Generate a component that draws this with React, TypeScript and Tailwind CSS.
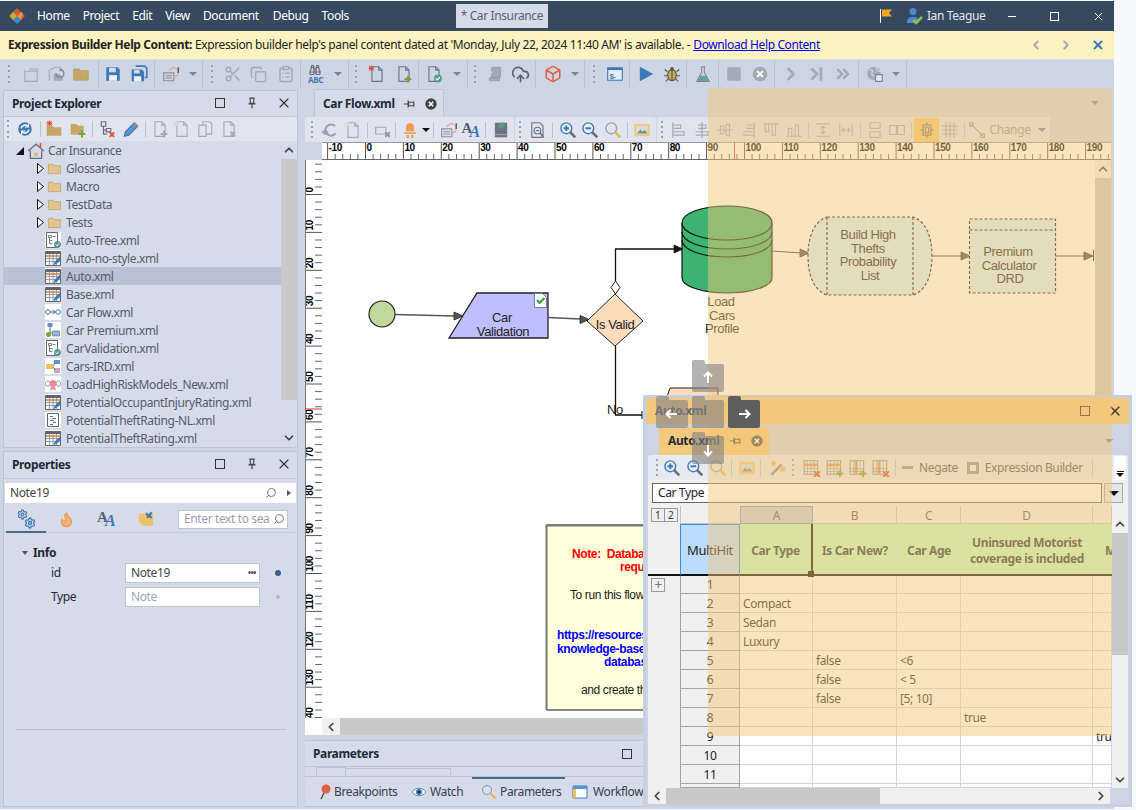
import type { ReactNode } from "react";
import {
  Binoculars,
  Box,
  ChevronDown,
  ChevronLeft,
  ChevronRight,
  ChevronUp,
  ChevronsRight,
  ClipboardList,
  CloudUpload,
  Copy,
  Flame,
  Scissors,
  Search,
  Settings,
  X,
} from "lucide-react";

const G = "#a3aab5";

const Svg = ({ children, size = 18 }: { children: ReactNode; size?: number }) => (
  <svg width={size} height={size} viewBox="0 0 16 16" fill="none">
    {children}
  </svg>
);

// toolbar pieces
const Tb = ({ children, className = "" }: { children: ReactNode; className?: string }) => (
  <div className={`flex h-[24px] w-[25px] shrink-0 items-center justify-center ${className}`}>{children}</div>
);
const Sep = ({ className = "", h = "h-[28px]" }: { className?: string; h?: string }) => (
  <div className={`w-px shrink-0 bg-[#b9c2d1] ${h} ${className}`} />
);
const Grip = ({ className = "" }: { className?: string }) => (
  <div className={`flex h-[18px] w-[8px] shrink-0 flex-col items-center justify-between ${className}`}>
    {[0, 1, 2, 3].map((i) => (
      <div key={i} className="h-[2px] w-[2px] bg-[#9aa3b0]" />
    ))}
  </div>
);
const Dd = ({ className = "", dark = false }: { className?: string; dark?: boolean }) => (
  <div className={`flex w-[10px] shrink-0 justify-center ${className}`}>
    <div
      className={`h-0 w-0 border-x-[4px] border-t-[4px] border-x-transparent ${dark ? "border-t-[#111]" : "border-t-[#7d8490]"}`}
    />
  </div>
);

// drawn icons
const Doc = ({ c = G }: { c?: string }) => (
  <path d="M3.5 1.5h6l3 3v10h-9z M9.5 1.5v3h3" stroke={c} />
);
const Star = ({ c = "#e0533c", x = 3, y = 3 }: { c?: string; x?: number; y?: number }) => (
  <path d={`M${x - 2.5} ${y}h5 M${x} ${y - 2.5}v5 M${x - 2} ${y - 2}l4 4 M${x + 2} ${y - 2}l-4 4`} stroke={c} strokeWidth="0.9" />
);
const NewDoc = ({ c = G, star = "#d9d9d9" }: { c?: string; star?: string }) => (
  <Svg>
    <Doc c={c} />
    <Star c={star} />
  </Svg>
);
const NewWin = () => (
  <Svg>
    <path d="M2.5 3.5h11v11h-11z" stroke={G} />
    <path d="M2.5 5.5h11" stroke={G} />
    <Star c="#dcdcdc" x={4} y={3} />
  </Svg>
);
const OpenGrey = () => (
  <Svg>
    <path d="M2 14V5l5-3h5v4" stroke={G} />
    <path d="M6 14V8h5l3 3v3z" fill={G} />
    <path d="M11 4a3.5 3.5 0 1 1-3 3" stroke="#7e8693" strokeWidth="1.2" />
  </Svg>
);
const Folder = ({ c = "#c5a768", size = 18 }: { c?: string; size?: number }) => (
  <Svg size={size}>
    <path d="M1.5 13.5V3.5h5l1.5 1.5h6.5v8.5z" fill={c} stroke="#b2965a" strokeWidth="0.6" />
  </Svg>
);
const Floppy = ({ c = "#3f78b5" }: { c?: string }) => (
  <Svg>
    <path d="M2 2h10l2 2v10H2z" fill={c} />
    <path d="M4.5 2.5h6v4h-6z" fill="#d5dbe9" />
    <path d="M4.5 9h7v5h-7z" fill="#eef1f7" />
  </Svg>
);
const SaveAll = () => (
  <Svg>
    <path d="M5 1h8l2 2v8h-2" stroke="#3f78b5" strokeWidth="1.4" />
    <path d="M1.5 4h9l2 2v8.500h-11z" fill="#3f78b5" />
    <path d="M3.500 4.500h5v3h-5z" fill="#d5dbe9" />
    <path d="M3.500 10h6.500v4.500H3.500z" fill="#eef1f7" />
  </Svg>
);
const ReDoc = () => (
  <Svg>
    <path d="M1.500 7h9v7h-9z" stroke="#8a919c" />
    <path d="M3 9.500h6M3 11.500h6" stroke="#8a919c" />
    <path d="M6 5l4-3 4 2v5l-3 2" stroke="#e8a99b" strokeWidth="1.2" />
    <path d="M14.500 2v5" stroke="#555c68" strokeWidth="1.200" />
  </Svg>
);
const AbcBinoc = () => (
  <div className="flex flex-col items-center leading-none">
    <Binoculars size={12} strokeWidth={2.4} color="#666d78" />
    <span className="text-[8px] font-bold leading-[8px] text-[#3f78b5]">ABC</span>
  </div>
);
const DocPlus = () => (
  <Svg>
    <Doc c="#6d7480" />
    <path d="M11.500 9.500v6M8.500 12.500h6" stroke="#7aa23c" strokeWidth="1.800" />
  </Svg>
);
const DocCheck = ({ c = "#6d7480" }: { c?: string }) => (
  <Svg>
    <Doc c={c} />
    <circle cx="11.500" cy="12" r="3.500" fill="#5c9a8a" />
    <path d="M9.800 12l1.200 1.300 2.200-2.500" stroke="#fff" />
  </Svg>
);
const Scroll = () => (
  <Svg>
    <path d="M5 2h8v9H5z M3 11h9v3H3z" fill={G} stroke="#8f96a1" strokeWidth="0.6" />
    <path d="M6 6a4 4 0 0 0-3 5" stroke="#d7dbe3" />
  </Svg>
);
const Term = () => (
  <Svg>
    <path d="M1.500 2.500h13v11h-13z" fill="#e5eaf3" stroke="#3f78b5" />
    <path d="M1.500 2.500h13v2h-13z" fill="#3f78b5" />
    <text x="3" y="12" fontSize="7" fontFamily="Liberation Sans" fontWeight="bold" fill="#3f78b5">
      $-
    </text>
  </Svg>
);
const Play = () => (
  <Svg>
    <path d="M2.500 1.500L14.500 8l-12 6.500z" fill="#3a7ab8" />
  </Svg>
);
const BugIcon = () => (
  <Svg>
    <ellipse cx="8" cy="9" rx="3.800" ry="5" fill="#c4ab60" stroke="#5d5748" />
    <path d="M8 4v10 M4 6L1.500 4 M12 6l2.500-2 M4 9.500H1 M12 9.500h3 M4.500 12.500l-2 2 M11.500 12.500l2 2" stroke="#5d5748" />
    <circle cx="8" cy="3.500" r="1.800" fill="#5d5748" />
  </Svg>
);
const Flask = () => (
  <Svg>
    <path d="M6 1.500h4M6.800 1.500v5L2.500 14.500h11L9.200 6.500v-5" stroke="#7f8895" />
    <path d="M5 9.500h6l2.200 4.700H2.800z" fill="#68a594" />
  </Svg>
);
const Stop = () => (
  <Svg>
    <path d="M2 2h12v12H2z" fill="#a4abb6" />
  </Svg>
);
const CircX = ({ size = 18, c = "#a4abb6" }: { size?: number; c?: string }) => (
  <Svg size={size}>
    <circle cx="8" cy="8" r="6.500" fill={c} />
    <path d="M5.500 5.500l5 5M10.500 5.500l-5 5" stroke="#fff" strokeWidth="1.800" />
  </Svg>
);
const Chev = () => <ChevronRight size={20} strokeWidth={3.4} color="#a4abb6" />;
const ChevBar = () => (
  <Svg>
    <path d="M3 3l5 5-5 5" stroke="#a4abb6" strokeWidth="2.500" />
    <path d="M11.500 2v12" stroke="#a4abb6" strokeWidth="2.500" />
  </Svg>
);
const GlobeDoc = () => (
  <Svg>
    <circle cx="7" cy="7.500" r="6" fill="#a4abb6" />
    <path d="M3 4l3 1-1 3 2 2M9 2l1 3 3 1" stroke="#cdd5e5" />
    <path d="M8.500 8.500h6v6h-6z" fill="#e3e7ef" stroke="#7e8693" />
  </Svg>
);
const Undo = () => (
  <Svg>
    <path d="M12.500 4.500A5 5 0 1 0 13 11 M3.500 11v-4 M1 9l2.500 2.500L6 9" stroke="#9ba2ad" strokeWidth="1.800" />
  </Svg>
);
const DelBox = () => (
  <Svg>
    <path d="M1.500 5.500h9v6h-9z" stroke={G} />
    <path d="M10 10l4 4M14 10l-4 4" stroke="#8f96a1" strokeWidth="1.800" />
  </Svg>
);
const Bulb = () => (
  <Svg>
    <path d="M4.500 9V5.500a3.500 3.500 0 0 1 7 0V9z" fill="#ee9a4d" />
    <path d="M3 10h10v1.500H3z" fill="#ee9a4d" />
    <path d="M5 12.500h2v2.500H5zM9 12.500h2v2.500H9z" fill="#ee9a4d" />
  </Svg>
);
const FontA = () => (
  <div className="relative h-[18px] w-[20px] font-['Liberation_Serif',serif] leading-none">
    <span className="absolute left-0 top-0 text-[15px] font-bold text-[#5a616d]">A</span>
    <span className="absolute left-[8px] top-[3px] text-[16px] font-bold italic text-[#3f78b5]">A</span>
  </div>
);
const Book = () => (
  <Svg>
    <path d="M2.500 1.500h11v13h-11z" fill="#6d7480" />
    <path d="M6 1.500h5v5.500l-2.500-1.500L6 7z" fill="#5c9a8a" />
    <path d="M2.500 12h11" stroke="#9aa1ac" />
  </Svg>
);
const DocSearch = () => (
  <Svg>
    <path d="M2.500 1.500h7l3 3v10h-10z" stroke="#6d7480" />
    <circle cx="7.500" cy="8.500" r="3" stroke="#6d7480" />
    <path d="M9.800 10.800l3.200 3.200" stroke="#6d7480" strokeWidth="1.500" />
    <path d="M6 8.500h3" stroke="#3f78b5" />
  </Svg>
);
const Lens = ({ sign }: { sign?: "+" | "-" }) => (
  <Svg>
    <circle cx="6.500" cy="6.500" r="4.800" fill={sign ? "#e9eef6" : "none"} stroke={sign ? "#3f78b5" : "#9aa3b0"} strokeWidth="1.200" />
    {sign && <path d="M4 6.500h5" stroke="#3f78b5" strokeWidth="1.800" />}
    {sign === "+" && <path d="M6.500 4v5" stroke="#3f78b5" strokeWidth="1.800" />}
    <path d="M10 10l4.500 4.500" stroke={sign ? "#666d78" : "#e9b654"} strokeWidth="2.200" />
  </Svg>
);
const Pic = () => (
  <Svg>
    <path d="M1 2.500h14v11H1z" fill="#f0c97e" />
    <path d="M3 4.500h10v7H3z" fill="#d7dde9" />
    <path d="M3.500 11l3-3.500 2 2 2-1.500 2.500 3z" fill="#6c9c7c" />
  </Svg>
);
const Align = ({ d }: { d: string }) => (
  <Svg>
    <path d={d} stroke={G} />
  </Svg>
);
const SnapIcon = () => (
  <Svg>
    <path d="M2 8h12M8 1v14" stroke="#6d7480" />
    <path d="M4.500 3.500h7v9h-7z" fill="#f5c775" stroke="#6d7480" />
    <path d="M6.500 5.500h3v5h-3z" stroke="#6d7480" />
  </Svg>
);
const GridIcon = () => (
  <Svg>
    <path d="M1 4.500h14M1 8h14M1 11.500h14M4.500 1v14M8 1v14M11.500 1v14" stroke={G} />
  </Svg>
);
const Connector = () => (
  <Svg>
    <path d="M3 3l10 10" stroke="#8f96a1" />
    <path d="M1.500 1.500h3v3h-3zM11.500 11.500h3v3h-3z" stroke="#8f96a1" />
  </Svg>
);
const Refresh = () => (
  <Svg>
    <circle cx="8" cy="8" r="6" fill="#3f78b5" />
    <path d="M4.500 7.500a3.600 3.600 0 0 1 6.300-1.800 M11.500 8.500a3.600 3.600 0 0 1-6.300 1.800" stroke="#fff" strokeWidth="1.400" />
    <path d="M11 3v3.200H7.800M5 13V9.800h3.200" stroke="#fff" />
  </Svg>
);
const FolderStar = () => (
  <Svg>
    <path d="M1.500 14V5h5l1.500 1.500h6.500V14z" fill="#c5a768" />
    <Star x={4} y={3} />
  </Svg>
);
const FolderPlus = () => (
  <Svg>
    <path d="M1.500 13V3.500h5L8 5h5v8z" fill="#c5a768" />
    <path d="M11.500 9v6.500M8.500 12.500h6" stroke="#7aa23c" strokeWidth="1.800" />
  </Svg>
);
const TreeDel = () => (
  <Svg>
    <path d="M2 1.500h4v4H2zM6.500 7.500h4v3h-4zM4 5.500v7h3M4 9h2.500" stroke="#666d78" />
    <path d="M9.500 11l4 4M13.500 11l-4 4" stroke="#e0533c" strokeWidth="1.800" />
  </Svg>
);
const Pencil = () => (
  <Svg>
    <path d="M2 14.500l1-4L11 2.500l3 3-8 8z" fill="#5d93cf" stroke="#3f78b5" />
    <path d="M11 2.500l3 3" stroke="#d87a6a" strokeWidth="1.600" />
  </Svg>
);
const CopyDoc = () => (
  <Svg>
    <path d="M6 1.500h6l2 2v9H6z" stroke={G} />
    <path d="M2.500 4.500h6.500v10H2.500z" fill="#dfe4ef" stroke={G} />
  </Svg>
);
const DocDel = () => (
  <Svg>
    <Doc />
    <path d="M9.500 10.500l4 4M13.500 10.500l-4 4" stroke="#a6acb6" strokeWidth="1.800" />
  </Svg>
);
const DocPlusGrey = () => (
  <Svg>
    <Doc />
    <path d="M11.500 9.500v6M8.500 12.500h6" stroke={G} strokeWidth="1.800" />
  </Svg>
);
const Pin = ({ c = "#444" }: { c?: string }) => (
  <Svg size={14}>
    <path d="M5 2.500h6M6 2.500v6h4v-6 M4 9h8 M8 9v5" stroke={c} strokeWidth="1.300" />
  </Svg>
);
const PinSide = ({ c = "#444" }: { c?: string }) => (
  <Svg size={14}>
    <path d="M13.500 5v6 M13.500 6h-6v4h6 M7 4v8 M7 8H2" stroke={c} strokeWidth="1.300" />
  </Svg>
);

// explorer file icons
const FileBg = ({ children }: { children: ReactNode }) => (
  <svg width="16" height="16" viewBox="0 0 16 16" fill="none">
    <rect width="16" height="16" fill="#fff" />
    {children}
  </svg>
);
const TableFile = () => (
  <FileBg>
    <path d="M0.500 1.500h15v14h-15z" fill="#f4f4f4" stroke="#5f6670" />
    <path d="M1 2h14v2H1z" fill="#5f6670" />
    <path d="M1 5h14v2H1z" fill="#e59c55" />
    <path d="M1 8.500h14M1 11.500h14M4.500 4v11.500M8 4v11.500M11.500 4v11.500" stroke="#8a919c" strokeWidth="0.800" />
    <path d="M8.500 15l1-3 5-5 2 2-5 5z" fill="#3f78b5" />
  </FileBg>
);
const RuleFile = () => (
  <FileBg>
    <path d="M1.500 0.500h11v15h-11z" stroke="#5f6670" />
    <path d="M3.500 3.500h3v2h-3zM4.500 5.500v6h3M4.500 8.500h3M7.500 4.500h3" stroke="#5f6670" strokeWidth="0.800" />
    <circle cx="12.500" cy="12.500" r="3.500" fill="#5c9a8a" />
    <path d="M10.800 12.500l1.200 1.300 2.200-2.500" stroke="#fff" />
  </FileBg>
);
const FlowFile = () => (
  <FileBg>
    <circle cx="3" cy="8" r="2.300" stroke="#3f78b5" />
    <circle cx="13" cy="8" r="2.300" stroke="#3f78b5" />
    <path d="M5.500 8h5M7.500 6l2.500 2-2.500 2" stroke="#5f6670" />
  </FileBg>
);
const TreeFile = () => (
  <FileBg>
    <path d="M2.500 1h5v4h-5z" fill="#5d93cf" />
    <path d="M5 5v6h2" stroke="#5f6670" />
    <circle cx="3.500" cy="12.500" r="2.500" fill="#7aa23c" />
    <path d="M7.500 9h7v5h-7z" fill="#8fb8e0" stroke="#5f6670" strokeWidth="0.600" />
  </FileBg>
);
const IrdFile = () => (
  <FileBg>
    <path d="M1 6h7v5H1z" fill="#f0c05a" />
    <path d="M9 2h6v4H9z" fill="#5d93cf" />
    <path d="M9 10h6v5H9z" fill="#c9a5c0" />
    <path d="M8 8l2-3M8 9l2 3" stroke="#5f6670" />
  </FileBg>
);
const LoadFile = () => (
  <FileBg>
    <path d="M0 8c1-4 4-4 5-1m6 0c1-3 4-3 5 1-1 3-4 3-5 0m-6 0c-1 3-4 3-5 0" stroke="#8a919c" />
    <circle cx="8" cy="7.500" r="3.500" fill="#e88aa0" />
    <path d="M6 11l-1 4 3-2 3 2-1-4" fill="#e88aa0" />
  </FileBg>
);
const NlFile = () => (
  <FileBg>
    <path d="M2.500 1.500h11v13h-11z" stroke="#5f6670" />
    <path d="M5 4.500h3M7 6.500h4M5 8.500h4M8 10.500h3M5 12.500h3" stroke="#3f78b5" />
    <path d="M7 6.500h2M5 8.500h2" stroke="#e0533c" />
  </FileBg>
);
const Home = () => (
  <Svg size={18}>
    <path d="M1 8l7-6 7 6M3 7.500v7h10v-7" stroke="#6d7480" strokeWidth="1.200" />
    <path d="M6.500 9.500h3v3h-3z" fill="#e9b654" />
    <path d="M12 1v4" stroke="#e0533c" strokeWidth="1.500" />
  </Svg>
);

const treeFiles: [string, () => ReactNode][] = [
  ["Auto-Tree.xml", RuleFile],
  ["Auto-no-style.xml", TableFile],
  ["Auto.xml", TableFile],
  ["Base.xml", TableFile],
  ["Car Flow.xml", FlowFile],
  ["Car Premium.xml", TreeFile],
  ["CarValidation.xml", RuleFile],
  ["Cars-IRD.xml", IrdFile],
  ["LoadHighRiskModels_New.xml", LoadFile],
  ["PotentialOccupantInjuryRating.xml", TableFile],
  ["PotentialTheftRating-NL.xml", NlFile],
  ["PotentialTheftRating.xml", TableFile],
];

const Tri = () => (
  <svg width="7" height="11" viewBox="0 0 7 11">
    <path d="M0.500 0.500l6 5-6 5z" fill="#fff" stroke="#111" />
  </svg>
);

const ProjectTree = () => (
  <div className="flex h-[306px] min-w-0 flex-1 flex-col overflow-hidden text-[12px] text-[#565b6b]">
    <div className="flex h-[18px] shrink-0 items-center pl-[12px] pt-px">
      <svg width="8" height="8" viewBox="0 0 8 8">
        <path d="M8 0v8H0z" fill="#111" />
      </svg>
      <div className="ml-[3px] mr-[3px]">
        <Home />
      </div>
      Car Insurance
    </div>
    {["Glossaries", "Macro", "TestData", "Tests"].map((t) => (
      <div key={t} className="flex h-[18px] shrink-0 items-center pl-[33px] pt-px">
        <Tri />
        <div className="ml-[3px] mr-[4px]">
          <Folder c="#e1c48e" size={15} />
        </div>
        {t}
      </div>
    ))}
    {treeFiles.map(([name, Icon]) => (
      <div
        key={name}
        className={`flex h-[18px] shrink-0 items-center pl-[41px] ${name === "Auto.xml" ? "bg-[#b9c1d4]" : ""}`}
      >
        <div className="mr-[5px] flex">
          <Icon />
        </div>
        <span className="pt-px">{name}</span>
      </div>
    ))}
  </div>
);

const WinBtns = () => (
  <>
    <div className="absolute left-[211px] top-[7px] h-[10px] w-[10px] border-[1.500px] border-[#333]" />
    <div className="absolute left-[241px] top-[5px]">
      <Pin />
    </div>
    <div className="absolute left-[272px] top-[4px]">
      <X size={16} color="#333" strokeWidth={1.6} />
    </div>
  </>
);

const ExplorerPanel = () => (
  <div className="h-[358px] w-[295px] border border-[#bcc5d3] bg-[#d5dbe9]">
    <div className="relative flex h-[26px] items-center border-b border-[#c3cad8] pl-[8px] text-[12px] font-bold text-[#1f2937]">
      Project Explorer
      <WinBtns />
    </div>
    <div className="flex h-[24px] items-center rounded-t-[3px] bg-[#e0e5ef]">
      <Grip />
      <Tb className="ml-[0.500px]">
        <Refresh />
      </Tb>
      <Sep h="h-[16px]" className="ml-[2.500px]" />
      <Tb className="ml-[0.500px]">
        <FolderStar />
      </Tb>
      <Tb className="ml-[-1px]">
        <FolderPlus />
      </Tb>
      <Sep h="h-[16px]" className="ml-[1.500px]" />
      <Tb className="ml-[2.500px]">
        <TreeDel />
      </Tb>
      <Tb className="ml-[-2px]">
        <Pencil />
      </Tb>
      <Sep h="h-[16px]" className="ml-[1.500px]" />
      <Tb className="ml-[1px]">
        <DocPlusGrey />
      </Tb>
      <Tb className="ml-[-3px]">
        <NewDoc />
      </Tb>
      <Tb className="ml-[-2px]">
        <CopyDoc />
      </Tb>
      <Tb className="ml-[-1px]">
        <DocDel />
      </Tb>
    </div>
    <div className="flex">
      <ProjectTree />
      <div className="flex w-[16px] shrink-0 flex-col items-center">
        <ChevronUp size={14} strokeWidth={3} color="#444" className="my-[2px]" />
        <div className="h-[241px] w-full bg-[#c8c8c8]" />
        <div className="flex-1" />
        <ChevronDown size={14} strokeWidth={3} color="#444" className="my-[2px]" />
      </div>
    </div>
  </div>
);

const PropertiesPanel = () => (
  <div className="mt-[3px] flex h-[356px] w-[295px] flex-col border border-[#bcc5d3] bg-[#d5dbe9]">
    <div className="relative flex h-[27px] shrink-0 items-center border-b border-[#c3cad8] pl-[8px] text-[12px] font-bold text-[#1f2937]">
      Properties
      <WinBtns />
    </div>
    <div className="mx-px mt-[4px] flex h-[20px] items-center bg-white pl-[5px] pr-[5px] text-[12px] text-[#444]">
      Note19
      <Search size={12} color="#777" className="ml-auto mr-[10px] -scale-x-100" />
      <div className="h-0 w-0 border-y-[3px] border-l-[4px] border-y-transparent border-l-[#555]" />
    </div>
    <div className="relative mt-[3px] flex h-[27px] shrink-0 items-center border-b border-[#c3cad8]">
      <div className="absolute bottom-[-1px] left-[2px] h-[2px] w-[40px] bg-[#4a6a8a]" />
      <div className="ml-[10px] flex h-[20px] w-[24px] flex-col pl-[3px]">
        <Settings size={11} color="#3f78b5" strokeWidth={2.6} />
        <Settings size={12} color="#3f78b5" strokeWidth={2.6} className="ml-[7px] mt-[-3px]" />
      </div>
      <div className="ml-[16px] flex w-[24px] justify-center">
        <Flame size={17} color="#ee9a4d" fill="#f3b27a" />
      </div>
      <div className="ml-[17px] flex w-[24px] justify-center">
        <FontA />
      </div>
      <div className="ml-[15px] flex w-[24px] justify-center">
        <Svg>
          <path d="M1.500 3h13v11H5l-3.500-3.500z" fill="#ecc26f" />
          <path d="M9 7l4-5M8 3l5 4" stroke="#3f78b5" strokeWidth="1.800" />
        </Svg>
      </div>
      <div className="ml-auto mr-[9px] flex h-[19px] w-[110px] items-center border border-[#bcc5d3] bg-white pl-[5px] pr-[2px] text-[12px] text-[#9aa0ab]">
        <span className="w-[88px] overflow-hidden whitespace-nowrap">Enter text to sea</span>
        <Search size={12} color="#777" className="ml-auto -scale-x-100" />
      </div>
    </div>
    <div className="mt-[11px] flex h-[18px] items-center pl-[18px] text-[12px] font-bold text-[#1f2937]">
      <div className="mr-[5px] h-0 w-0 border-x-[3px] border-t-[4px] border-x-transparent border-t-[#555]" />
      Info
    </div>
    <div className="mt-px flex h-[20px] items-center text-[12px] text-[#1f2937]">
      <div className="w-[121px] pl-[47px]">id</div>
      <div className="flex h-[20px] w-[135px] items-center border border-[#bcc5d3] bg-white pl-[5px] pr-[3px] text-[#444]">
        Note19
        <span className="ml-auto text-[8px] font-bold leading-none">•••</span>
      </div>
      <div className="ml-[15px] h-[6px] w-[6px] rounded-full bg-[#3f5f85]" />
    </div>
    <div className="mt-[4px] flex h-[20px] items-center text-[12px] text-[#1f2937]">
      <div className="w-[121px] pl-[47px]">Type</div>
      <div className="flex h-[20px] w-[135px] items-center border border-[#bcc5d3] bg-white pl-[5px] text-[#a0a6b0]">
        Note
      </div>
      <div className="ml-[16px] h-[4px] w-[4px] rounded-full bg-[#b5bcc9]" />
    </div>
    <div className="mx-[11px] mt-[122px] h-px bg-[#bcc3d2]" />
  </div>
);

const MainToolbar = () => (
  <div className="flex h-[29px] shrink-0 items-center border-t border-[#d8deea] bg-[#cdd5e5] pl-[5px]">
    <Grip />
    <Tb className="ml-[5.500px]"><NewWin /></Tb>
    <Tb><OpenGrey /></Tb>
    <Tb><Folder /></Tb>
    <Sep className="ml-[4px]" />
    <Tb className="ml-[2px]"><Floppy /></Tb>
    <Tb className="ml-[1px]"><SaveAll /></Tb>
    <Sep className="ml-[2px]" />
    <Tb className="ml-[4px]"><ReDoc /></Tb>
    <Dd className="ml-[4.500px]" />
    <Sep className="ml-[4px]" />
    <Grip className="ml-[4.500px]" />
    <Tb className="ml-[4.500px]"><Scissors size={18} color={G} /></Tb>
    <Tb className="ml-[1px]"><Copy size={17} color={G} /></Tb>
    <Tb className="ml-[2px]"><ClipboardList size={18} color={G} /></Tb>
    <Sep className="ml-[2px]" />
    <Tb className="ml-[2px]"><AbcBinoc /></Tb>
    <Dd className="ml-[5px]" />
    <Sep className="ml-[5px]" />
    <Grip className="ml-[3px]" />
    <Tb className="ml-[4.500px]"><NewDoc c="#6d7480" star="#e0533c" /></Tb>
    <Tb className="ml-[2px]"><DocPlus /></Tb>
    <Sep className="ml-[1px]" />
    <Tb className="ml-[3px]"><DocCheck /></Tb>
    <Dd className="ml-[5px]" />
    <Sep className="ml-[5px]" />
    <Grip className="ml-[3px]" />
    <Tb className="ml-[3.500px]"><Scroll /></Tb>
    <Tb className="ml-[1px]"><CloudUpload size={19} color="#56606e" /></Tb>
    <Sep className="ml-[2px]" />
    <Tb className="ml-[4px]"><Box size={18} color="#e0603f" /></Tb>
    <Dd className="ml-[5px]" />
    <Sep className="ml-[4px]" />
    <Grip className="ml-[4.500px]" />
    <Tb className="ml-[4.500px]"><Term /></Tb>
    <Sep className="ml-[2px]" />
    <Tb className="ml-[3px]"><Play /></Tb>
    <Tb className="ml-[1px]"><BugIcon /></Tb>
    <Sep className="ml-[2px]" />
    <Tb className="ml-[3px]"><Flask /></Tb>
    <Sep className="ml-[3px]" />
    <Tb className="ml-[2px]"><Stop /></Tb>
    <Tb className="ml-[1px]"><CircX /></Tb>
    <Sep className="ml-[2px]" />
    <Tb className="ml-[3px]"><Chev /></Tb>
    <Tb className="ml-[1px]"><ChevBar /></Tb>
    <Tb className="ml-[1px]"><ChevronsRight size={20} strokeWidth={3} color="#a4abb6" /></Tb>
    <Sep className="ml-[3px]" />
    <Tb className="ml-[3px]"><GlobeDoc /></Tb>
    <Dd className="ml-[4px]" />
    <Sep className="ml-[5px]" />
  </div>
);

const DocToolbar = () => (
  <div className="flex h-[25px] shrink-0 items-stretch bg-[#cdd5e5] text-[12px]">
    <div className="flex w-[209px] items-center rounded-t-[3px] bg-[#dfe4ef]">
      <Grip className="ml-[3px]" />
      <Tb className="ml-[1px]"><Undo /></Tb>
      <Tb className="ml-[-2px]"><NewDoc /></Tb>
      <Sep h="h-[16px]" className="ml-[2px]" />
      <Tb className="ml-[2px]"><DelBox /></Tb>
      <Sep h="h-[16px]" className="ml-[0px]" />
      <Tb className="ml-[1px]"><Bulb /></Tb>
      <Dd className="ml-[-1px]" dark />
      <Sep h="h-[16px]" className="ml-[2px]" />
      <Tb className="ml-[2px]"><ReDoc /></Tb>
      <Tb className="ml-[-2px]"><FontA /></Tb>
      <Sep h="h-[16px]" className="ml-[1px]" />
      <Tb className="ml-[2px]"><Book /></Tb>
    </div>
    <div className="ml-px flex w-[141px] items-center rounded-t-[3px] bg-[#dfe4ef]">
      <Grip className="ml-[1px]" />
      <Tb className="ml-[1px]"><DocSearch /></Tb>
      <Sep h="h-[16px]" className="ml-[2px]" />
      <Tb className="ml-[2px]"><Lens sign="+" /></Tb>
      <Tb className="ml-[-3px]"><Lens sign="-" /></Tb>
      <Tb className="ml-[-2px]"><Lens /></Tb>
      <Sep h="h-[16px]" className="ml-[2px]" />
      <Tb className="ml-[1px]"><Pic /></Tb>
    </div>
    <div className="ml-px flex w-[393px] items-center rounded-t-[3px] bg-[#dfe4ef]">
      <Grip className="ml-[1px]" />
      <Tb className="ml-[0px]"><Align d="M2.500 1v14M2.500 3.500h7v3h-7M2.500 9.500h10v3h-10" /></Tb>
      <Tb className="ml-[-2px]"><Align d="M8 1v14M4.500 3.500h7v3h-7M2.500 9.500h11v3h-11" /></Tb>
      <Tb className="ml-[-2px]"><Align d="M1 8h14M4 4.500h3v7H4zM9 3h3v10H9z" /></Tb>
      <Tb className="ml-[-2px]"><Align d="M13.500 1v14M6.500 3.500h7v3h-7M3.500 9.500h10v3h-10" /></Tb>
      <Tb className="ml-[-2px]"><Align d="M1 2.500h14M3 2.500v7h3v-7M9 2.500v10h3v-10" /></Tb>
      <Tb className="ml-[-2px]"><Align d="M1 13.500h14M3 13.500v-7h3v7M9 13.500v-10h3v10" /></Tb>
      <Sep h="h-[16px]" className="ml-[1.500px]" />
      <Tb className="ml-[2px]"><Align d="M2 2.500h12M2 13.500h12M8 5v6M6 6.500L8 4.500l2 2M6 9.500l2 2 2-2" /></Tb>
      <Tb className="ml-[-2.500px]"><Align d="M2.500 3v10M13.500 3v10M5 8h6M6.500 6L4.500 8l2 2M9.500 6l2 2-2 2" /></Tb>
      <Sep h="h-[16px]" className="ml-[2px]" />
      <Tb className="ml-[1px]"><Align d="M3.500 1.500h9v5h-9zM3.500 9.500h9v5h-9z" /></Tb>
      <Tb className="ml-[-2.500px]"><Align d="M1.500 4h6v8h-6zM8.500 4h6v8h-6z" /></Tb>
      <Sep h="h-[16px]" className="ml-[1.500px]" />
      <Tb className="ml-[2px] bg-[#f5c775]"><SnapIcon /></Tb>
      <Tb className="ml-[-2px]"><GridIcon /></Tb>
      <Sep h="h-[16px]" className="ml-[1.500px]" />
      <Tb className="ml-[0px]"><Connector /></Tb>
      <span className="text-[#8f96a1]">Change</span>
      <Dd className="ml-[6px]" />
    </div>
  </div>
);

const HRuler = () => {
  const ticks = [];
  for (let i = -2; i < 24; i++) {
    const x = 5.600 + (i + 1) * 37.9;
    ticks.push(
      <g key={i}>
        <line x1={x} x2={x} y1={0} y2={18} stroke="#555" />
        {[1, 2, 3, 4].map((k) => (
          <line key={k} x1={x + k * 7.58} x2={x + k * 7.58} y1={12} y2={18} stroke="#666" />
        ))}
        <text x={x + 1} y={9} fontSize="10" fontWeight="bold" fontFamily="Liberation Sans" fill="#000">
          {i * 10}
        </text>
      </g>,
    );
  }
  return (
    <svg width="789" height="18" className="bg-white">
      {ticks}
      <line x1="0" x2="789" y1="0.500" y2="0.500" stroke="#999" />
      <line x1="0" x2="789" y1="17.500" y2="17.500" stroke="#666" />
      <line x1="412.500" x2="412.500" y1="0" y2="18" stroke="#e03030" />
    </svg>
  );
};

const VRuler = () => {
  const ticks = [];
  for (let i = 0; i < 15; i++) {
    const y = 34.5 + i * 37.9;
    ticks.push(
      <g key={i}>
        <line x1={0} x2={17} y1={y} y2={y} stroke="#555" />
        {[-1, -2, -3, -4].map((k) => (
          <line key={k} x1={10} x2={17} y1={y + k * 7.58} y2={y + k * 7.58} stroke="#666" />
        ))}
        <text
          transform={`translate(8 ${y - 2}) rotate(-90)`}
          fontSize="10"
          fontWeight="bold"
          fontFamily="Liberation Sans"
          fill="#000"
        >
          {i * 10}
        </text>
      </g>,
    );
  }
  return (
    <svg width="17" height="558" className="shrink-0 bg-white">
      {ticks}
      <line x1="0.500" x2="0.500" y1="0" y2="558" stroke="#777" />
      <line x1="0" x2="17" y1="249" y2="249" stroke="#e03030" />
    </svg>
  );
};

const T = ({ x, y, children, c = "#222", bold = false }: { x: number; y: number; children: string; c?: string; bold?: boolean }) => (
  <text x={x} y={y} textAnchor="middle" fontSize="13" fontFamily="Liberation Sans" fill={c} fontWeight={bold ? "bold" : "normal"}>
    {children}
  </text>
);
const S = ({ x, y, children, c = "#222", bold = false }: { x: number; y: number; children: string; c?: string; bold?: boolean }) => (
  <text x={x} y={y} fontSize="12" fontFamily="Liberation Sans" fill={c} fontWeight={bold ? "bold" : "normal"}>
    {children}
  </text>
);
const Arrow = ({ x, y, a = "#555", s = "#222" }: { x: number; y: number; a?: string; s?: string }) => (
  <path d={`M${x - 9} ${y - 4}L${x} ${y}L${x - 9} ${y + 4}z`} fill={a} stroke={s} strokeWidth="0.800" />
);

const Diagram = () => (
  <svg width="773" height="558" viewBox="322 160 773 558" fill="none" className="block bg-white">
    <circle cx="382" cy="314" r="13" fill="#c0d89a" stroke="#222" strokeWidth="1.200" />
    <path d="M395 314.500L455 316" stroke="#555" strokeWidth="1.300" />
    <Arrow x={463} y={316} />
    <path d="M477 293h71v45h-99z" fill="#bfbfff" stroke="#222" strokeWidth="1.300" />
    <path d="M534.500 293.500h8l4 4v10h-12z" fill="#fff" stroke="#6a7fb0" />
    <path d="M537 300l2.500 3 5-5" stroke="#2f9e2f" strokeWidth="2" />
    <T x={502} y={322}>Car</T>
    <T x={503} y={336}>Validation</T>
    <path d="M548 317.500L580 319" stroke="#555" strokeWidth="1.300" />
    <Arrow x={589} y={319.500} />
    <path d="M615 294l28 27-28 25-28-25z" fill="#fddcbc" stroke="#222" />
    <path d="M615.500 281l4.500 6.500-4.500 6.500-4.500-6.500z" fill="#fff" stroke="#222" />
    <T x={615} y={329}>Is Valid</T>
    <path d="M615.500 281v-32H675" stroke="#111" strokeWidth="1.300" />
    <Arrow x={683} y={249} a="#111" />
    <path d="M615.500 346v69H642" stroke="#111" strokeWidth="1.300" />
    <T x={615} y={414}>No</T>
    <path d="M642 411v8" stroke="#111" />
    <path d="M670 388h48v20h-55z" fill="#fddcbc" stroke="#222" />
    <path
      d="M682 223c0-10 20-17 45-17s45 7 45 17v55c0 8-20 15-45 15s-45-7-45-15z"
      fill="#3cb371"
      stroke="#111"
      strokeWidth="1.200"
    />
    <path
      d="M682 223c0 10 20 17 45 17s45-7 45-17M682 232c0 10 20 17 45 17s45-7 45-17M682 240c0 10 20 17 45 17s45-7 45-17"
      stroke="#111"
      strokeWidth="1.200"
    />
    <T x={721} y={306}>Load</T>
    <T x={722} y={320}>Cars</T>
    <T x={722} y={333}>Profile</T>
    <path d="M772 251L801 253" stroke="#333" />
    <Arrow x={809} y={253} />
    <path
      d="M827 217h86c12 4 19 18 19 39s-7 35-19 39h-86c-12-4-19-18-19-39s7-35 19-39z"
      fill="#d4f1ff"
      stroke="#222"
      strokeWidth="1.200"
      strokeDasharray="3 2"
    />
    <path d="M827 217v78M913 217v78" stroke="#222" strokeWidth="1.200" strokeDasharray="3 2" />
    <T x={868} y={239}>Build High</T>
    <T x={868} y={253}>Thefts</T>
    <T x={868} y={266}>Probability</T>
    <T x={870} y={280}>List</T>
    <path d="M932 256h29" stroke="#333" />
    <Arrow x={970} y={256} />
    <path d="M969.500 219h86v74h-86zM969.500 230h86" fill="#d4f1ff" stroke="#222" strokeWidth="1.200" strokeDasharray="3 2" />
    <T x={1008} y={256}>Premium</T>
    <T x={1009} y={270}>Calculator</T>
    <T x={1010} y={283}>DRD</T>
    <path d="M1055 256h29" stroke="#333" />
    <Arrow x={1093} y={256} />
    <path d="M1093.500 250v11" stroke="#222" />

    <path d="M546.500 525h420v185h-420z" fill="#ffffdc" stroke="#111" />
    <path d="M546.500 710V525.500H966" stroke="#777" strokeWidth="2" />
    <S x={572} y={558} c="#ff0000" bold>{"Note:\u00a0\u00a0Database connection"}</S>
    <S x={620} y={571} c="#ff0000" bold>required</S>
    <S x={570} y={599}>To run this flow, connect</S>
    <S x={557} y={639} c="#0000ff" bold>https://resources.example</S>
    <S x={557} y={653} c="#0000ff" bold>knowledge-base/setup</S>
    <S x={604} y={666} c="#0000ff" bold>database</S>
    <S x={581} y={694}>and create the tables.</S>
  </svg>
);

const Editor = () => (
  <div className="flex flex-col">
    <DocToolbar />
    <div className="flex h-[18px] overflow-hidden bg-[#cdd5e5]">
      <div className="w-[17px] shrink-0" />
      <HRuler />
    </div>
    <div className="flex h-[558px]">
      <VRuler />
      <div className="w-[773px] shrink-0">
        <Diagram />
      </div>
      <div className="flex w-[16px] shrink-0 flex-col items-center bg-[#f0f0f0]">
        <ChevronUp size={14} strokeWidth={3} color="#444" className="my-[2px]" />
        <div className="w-full flex-1 bg-[#c8c8c8]" />
      </div>
    </div>
    <div className="flex h-[17px] bg-[#cdd5e5]">
      <div className="w-[17px] shrink-0 bg-white" />
      <div className="flex w-[18px] shrink-0 items-center justify-center bg-[#f0f0f0]">
        <ChevronLeft size={14} strokeWidth={3} color="#444" />
      </div>
      <div className="w-[755px] bg-[#c8c8c8]" />
    </div>
  </div>
);

const BottomTab = ({ children, w, icon, active }: { children: string; w: string; icon: ReactNode; active?: boolean }) => (
  <div className={`relative flex h-[29px] shrink-0 items-center text-[12px] text-[#374151] ${w}`}>
    {active && <div className="absolute left-0 right-0 top-0 h-[2px] bg-[#4a6a8a]" />}
    {icon}
    {children}
  </div>
);

const ParamsPanel = () => (
  <div className="mt-[5px] flex h-[67px] flex-col border-y border-[#bcc5d3] bg-[#d5dbe9]">
    <div className="relative flex h-[26px] shrink-0 items-center border-b border-[#bcc5d3] pl-[8px] text-[12px] font-bold text-[#1f2937]">
      Parameters
      <div className="absolute left-[317px] top-[8px] h-[10px] w-[10px] border-[1.500px] border-[#333]" />
    </div>
    <div className="flex h-[10px] shrink-0 border-b border-[#bcc5d3] pl-[11px]">
      <div className="h-[9px] w-[30px] border-x border-t border-[#bcc5d3]" />
      <div className="mt-px h-[8px] w-[105px] border-r border-t border-[#bcc5d3]" />
    </div>
    <div className="flex flex-1 pl-[12px]">
      <BottomTab
        w="w-[94px]"
        icon={
          <div className="mr-[5px] w-[12px]">
            <Svg size={16}>
              <circle cx="9" cy="5" r="4.500" fill="#e2603f" />
              <path d="M7 9l-3 6" stroke="#555" strokeWidth="1.500" />
            </Svg>
          </div>
        }
      >
        Breakpoints
      </BottomTab>
      <BottomTab
        w="w-[61px]"
        icon={
          <div className="mr-[3px]">
            <Svg size={16}>
              <path d="M1 8c3-5 11-5 14 0-3 5-11 5-14 0z" fill="#e6eef7" stroke="#6d93b8" />
              <circle cx="8" cy="8" r="3" fill="#3f78b5" />
              <circle cx="8" cy="8" r="1.200" fill="#222" />
            </Svg>
          </div>
        }
      >
        Watch
      </BottomTab>
      <BottomTab
        active
        w="w-[93px] pl-[9px]"
        icon={
          <div className="mr-[3px]">
            <Svg size={16}>
              <circle cx="6" cy="6" r="4.500" fill="#cfe2f5" stroke="#8a919c" />
              <path d="M9.500 9.500l5 5" stroke="#e9b654" strokeWidth="2.200" />
            </Svg>
          </div>
        }
      >
        Parameters
      </BottomTab>
      <BottomTab
        w="w-[100px] pl-[7px]"
        icon={
          <div className="mr-[5px]">
            <Svg size={16}>
              <path d="M1 2h14v12H1z" fill="#fff" stroke="#3f78b5" />
              <path d="M1 2h14v3H1z" fill="#5d93cf" />
              <path d="M1 5h3v9H1z" fill="#f0c05a" />
            </Svg>
          </div>
        }
      >
        Workflow
      </BottomTab>
    </div>
  </div>
);

const rows: string[][] = [
  ["", "", "", "", ""],
  ["Compact", "", "", "", ""],
  ["Sedan", "", "", "", ""],
  ["Luxury", "", "", "", ""],
  ["", "false", "<6", "", ""],
  ["", "false", "< 5", "", ""],
  ["", "false", "[5; 10]", "", ""],
  ["", "", "", "true", ""],
  ["", "", "", "", "true"],
  ["", "", "", "", ""],
  ["", "", "", "", ""],
  ["", "", "", "", ""],
];

const colHead = "flex items-center justify-center border-r border-b border-[#c3c3c3] bg-[#f0f0f0] pt-[2px] text-[#555]";
const bigHead =
  "flex items-center justify-center border-b-2 border-[#111] bg-[#c4fcc8] pt-[3px] text-center font-bold leading-[16px] text-[#2d3644]";

const DecisionTable = () => (
  <div className="grid h-[282px] w-[464px] shrink-0 grid-cols-[32px_60px_73px_84px_64px_132px_19px] grid-rows-[18px_52px_18px_repeat(10,19px)_4px] overflow-hidden bg-[#f0f0f0] text-[12px]">
    <div className="flex items-center pl-[3px]">
      <div className="flex h-[14px] w-[27px] border border-[#9a9a9a] bg-[#f0f0f0] text-[10px] leading-[12px] text-[#333]">
        <span className="w-[13px] border-r border-[#9a9a9a] text-center">1</span>
        <span className="w-[13px] text-center">2</span>
      </div>
    </div>
    <div className="border-b border-l border-[#c3c3c3] bg-[#f0f0f0]" />
    <div className="flex items-center justify-center border border-[#7d9cc8] bg-[#c4cedc] pt-[2px] text-[#555]">A</div>
    <div className={colHead}>B</div>
    <div className={colHead}>C</div>
    <div className={colHead}>D</div>
    <div className={colHead} />

    <div className="border-b-2 border-[#111]" />
    <div className="flex items-center justify-center border border-b-2 border-[#3d8be0] border-b-[#111] bg-[#bbdcff] pt-[3px] text-[13px] text-[#222]">
      MultiHit
    </div>
    <div className={`${bigHead} relative border-r-2 border-r-[#111]`}>
      Car Type
      <div className="absolute bottom-[-3px] right-[-3px] h-[6px] w-[6px] bg-[#111]" />
    </div>
    <div className={bigHead}>Is Car New?</div>
    <div className={bigHead}>Car Age</div>
    <div className={bigHead}>
      Uninsured Motorist
      <br />
      coverage is included
    </div>
    <div className={`${bigHead} justify-start whitespace-nowrap pl-[12px]`}>Medical</div>

    {rows.map((r, i) => (
      <div key={i} className="contents">
        <div className="flex items-start pl-[3px] pt-[2px]">
          {i === 0 && (
            <div className="flex h-[14px] w-[14px] items-center justify-center border border-[#9a9a9a] text-[14px] leading-none text-[#777]">
              +
            </div>
          )}
        </div>
        <div className="flex items-center justify-center border-x border-b border-[#a5a5a5] bg-[#f0f0f0] pt-px text-[#222]">
          {i < 11 ? i + 1 : ""}
        </div>
        {r.map((v, k) => (
          <div
            key={k}
            className="flex items-center overflow-hidden whitespace-nowrap border-r border-b border-[#cdd5e5] bg-white pl-[3px] pt-[2px] text-[#222]"
          >
            {v}
          </div>
        ))}
      </div>
    ))}
  </div>
);

function TableOp({ c, plus, top }: { c: string; plus?: boolean; top?: boolean }) {
  return (
    <Svg>
      <path d="M1 1.500h12v12H1z" fill="#eef1f7" stroke="#8a919c" />
      <path d={top ? "M5 2v11h2.500V2z" : "M1 4h12v2.500H1z"} fill="#e59c55" />
      <path d="M1 8.500h12M1 11h12M4 2v11M7 2v11M10 2v11" stroke="#8a919c" strokeWidth="0.600" />
      {plus ? (
        <path d="M12.500 10v6M9.500 13h6" stroke={c} strokeWidth="1.800" />
      ) : (
        <path d="M10 11l5 5M15 11l-5 5" stroke={c} strokeWidth="1.800" />
      )}
    </Svg>
  );
}

const FloatingWindow = () => (
  <div className="absolute left-[643px] top-[395px] flex h-[412px] w-[489px] flex-col border-[3px] border-[#c5d0e2] bg-[#cdd5e5] text-[12px]">
    <div className="relative flex h-[26px] shrink-0 items-center bg-[#f2c97f] pl-[9px] font-bold text-[#5b6470]">
      Auto.xml
      <div className="absolute left-[434px] top-[8px] h-[10px] w-[10px] border border-[#333]" />
      <div className="absolute left-[461px] top-[5px]">
        <X size={16} color="#333" strokeWidth={1.8} />
      </div>
    </div>
    <div className="relative h-[31px] shrink-0 pl-[13px] pt-[3px]">
      <div className="flex h-[28px] w-[110px] items-center bg-[#f2c97f] pl-[9px] font-bold text-[#1f2937]">
        Auto.xml
        <div className="ml-[9px]">
          <PinSide />
        </div>
        <div className="ml-[8px]">
          <CircX size={14} c="#555" />
        </div>
      </div>
      <div className="absolute right-[16px] top-[15px] h-0 w-0 border-x-[4px] border-t-[4px] border-x-transparent border-t-[#7d8490]" />
    </div>
    <div className="ml-[2px] mr-px flex h-[25px] shrink-0 items-center rounded-t-[3px] bg-[#e6eaf2]">
      <Grip className="ml-[5px]" />
      <Tb className="ml-[-2px]"><Lens sign="+" /></Tb>
      <Tb className="ml-[-2px]"><Lens sign="-" /></Tb>
      <Tb className="ml-[-2px]"><Lens /></Tb>
      <Sep h="h-[16px]" className="ml-[1px]" />
      <Tb className="ml-[2px]"><Pic /></Tb>
      <Sep h="h-[16px]" className="ml-[1px]" />
      <Tb className="ml-[3px]">
        <Svg>
          <path d="M3 14L12 5" stroke="#8a919c" strokeWidth="2.500" />
          <Star c="#e9b654" x={5} y={4} />
          <Star c="#e9b654" x={13} y={9} />
        </Svg>
      </Tb>
      <Grip className="ml-0" />
      <Tb className="ml-[2px]"><TableOp c="#e0533c" /></Tb>
      <Tb className="ml-[-2px]"><TableOp c="#7aa23c" plus /></Tb>
      <Tb className="ml-[-2px]"><TableOp c="#7aa23c" plus top /></Tb>
      <Tb className="ml-[-2px]"><TableOp c="#e0533c" top /></Tb>
      <Sep h="h-[16px]" className="ml-[2px]" />
      <div className="ml-[6px] h-[2.500px] w-[11px] bg-[#8f96a1]" />
      <span className="ml-[6px] text-[#4b5563]">Negate</span>
      <div className="ml-[7px]">
        <Svg size={16}>
          <path d="M2 2h12v12H2z" fill="#8f96a1" />
          <path d="M5 5h6v6H5z" fill="#eef1f7" />
        </Svg>
      </div>
      <span className="ml-[4px] text-[#4b5563]">Expression Builder</span>
      <Sep h="h-[16px]" className="ml-[9px]" />
      <div className="ml-auto mr-[2px] flex h-[24px] w-[12px] flex-col items-center justify-end bg-white pb-[3px]">
        <div className="mb-px h-px w-[7px] bg-[#111]" />
        <div className="h-0 w-0 border-x-[4px] border-t-[4px] border-x-transparent border-t-[#111]" />
      </div>
    </div>
    <div className="ml-[2px] mr-px flex h-[26px] shrink-0 items-center bg-[#f0f0f0] pl-[4px]">
      <div className="flex h-[20px] w-[450px] items-center border border-[#666] bg-white pl-[5px] text-[#222]">Car Type</div>
      <div className="ml-[2px] flex h-[20px] w-[19px] items-center justify-center border border-[#aaa] bg-[#e6e6e6]">
        <div className="h-0 w-0 border-x-[5px] border-t-[5px] border-x-transparent border-t-[#111]" />
      </div>
    </div>
    <div className="ml-[2px] mr-px flex h-[282px] shrink-0">
      <DecisionTable />
      <div className="flex w-[16px] shrink-0 flex-col items-center bg-[#f0f0f0]">
        <ChevronUp size={14} strokeWidth={3} color="#444" className="mb-[2px] mt-[11px]" />
        <div className="h-[122px] w-full bg-[#c8c8c8]" />
        <div className="flex-1" />
        <ChevronDown size={14} strokeWidth={3} color="#444" className="my-px" />
      </div>
    </div>
    <div className="ml-[2px] mr-px flex h-[16px] shrink-0">
      <div className="flex w-[18px] items-center justify-center bg-[#f0f0f0]">
        <ChevronLeft size={14} strokeWidth={3} color="#444" />
      </div>
      <div className="w-[214px] bg-[#c8c8c8]" />
      <div className="flex w-[230px] items-center justify-end bg-[#f0f0f0] pr-[2px]">
        <ChevronRight size={14} strokeWidth={3} color="#444" />
      </div>
    </div>
  </div>
);

const DockGuide = ({ className, dark, arrow }: { className: string; dark?: boolean; arrow?: string }) => (
  <svg width="32" height="32" viewBox="0 0 32 32" className={`absolute ${className}`}>
    <path
      d="M0 2a2 2 0 0 1 2-2h9a2 2 0 0 1 2 2v2h17a2 2 0 0 1 2 2v24a2 2 0 0 1-2 2H2a2 2 0 0 1-2-2z"
      fill={dark ? "#5e5e5e" : "rgba(128,128,128,0.6)"}
    />
    {arrow && <path d={arrow} stroke="#fff" strokeWidth="2" fill="none" />}
  </svg>
);

export default function App() {
  return (
    <div className="relative h-[810px] w-[1136px] overflow-hidden bg-[#f8f9fc] pt-px font-['Noto_Sans','Open_Sans',sans-serif] tracking-[-0.38px]">
      <div className="flex h-[808px] w-[1114px] flex-col bg-[#cdd5e5]">
        <div className="relative flex h-[30px] shrink-0 items-center bg-[#36495f] text-[12px] text-white">
          <svg width="18" height="18" viewBox="0 0 18 18" className="ml-[8px]">
            <path d="M9 1l4 4-4 4-4-4z" fill="#d9572e" />
            <path d="M1 9l4-4 4 4-4 4z" fill="#7aa23c" />
            <path d="M17 9l-4-4-4 4 4 4z" fill="#d9572e" />
            <path d="M9 9l4 4-4 4-4-4z" fill="#3f8ac8" />
            <path d="M5 5l4 4-4 4-3-4zM13 13l-4-4 4-4 2 1z" fill="#e9a83c" opacity="0.8" />
          </svg>
          <span className="ml-[11px]">Home</span>
          <span className="ml-[13px]">Project</span>
          <span className="ml-[13px]">Edit</span>
          <span className="ml-[13px]">View</span>
          <span className="ml-[13px]">Document</span>
          <span className="ml-[14px]">Debug</span>
          <span className="ml-[13px]">Tools</span>
          <div className="ml-[107px] flex h-[24px] w-[92px] items-center justify-center bg-[#d5dbe9] text-[#5a6272]">
            * Car Insurance
          </div>
          <div className="ml-[331px] flex items-center">
            <svg width="14" height="16" viewBox="0 0 14 16">
              <path d="M1.500 1v14" stroke="#fff" />
              <path d="M3 1.500h10l-3 3.500 3 3.500H3z" fill="#f4a81d" />
            </svg>
          </div>
          <div className="ml-[14px]">
            <svg width="16" height="18" viewBox="0 0 16 18">
              <circle cx="6" cy="4.500" r="3.500" fill="#4a8ad0" />
              <path d="M0 16c0-5 2-6 6-6s6 1 6 6z" fill="#4a8ad0" />
              <path d="M6 13l3 3 6-6" stroke="#8cc63f" strokeWidth="2.500" fill="none" />
            </svg>
          </div>
          <span className="ml-[4px] text-[#e4e8ef]">Ian Teague</span>
          <div className="ml-[23px] h-px w-[8px] bg-white" />
          <div className="ml-[34px] h-[9px] w-[9px] border border-white" />
          <div className="ml-[33px]">
            <X size={13} color="#fff" strokeWidth={1.8} />
          </div>
        </div>
        <div className="flex h-[28px] shrink-0 items-center bg-[#fdf3c0] pl-[8px] text-[12px] text-[#222]">
          <span className="font-bold">Expression Builder Help Content:</span>
          <span className="ml-[3px]">
            Expression builder help's panel content dated at 'Monday, July 22, 2024 11:40 AM' is available. -
          </span>
          <span className="ml-[3px] text-[#0000ee] underline">Download Help Content</span>
          <ChevronLeft size={14} strokeWidth={3.4} color="#a4abb6" className="absolute left-[1029px]" />
          <ChevronRight size={14} strokeWidth={3.4} color="#a4abb6" className="absolute left-[1059px]" />
          <X size={14} strokeWidth={3.4} color="#3a7ab8" className="absolute left-[1091px]" />
        </div>
        <MainToolbar />
        <div className="flex min-h-0 flex-1">
          <div className="ml-[3px] flex w-[295px] shrink-0 flex-col pt-[2px]">
            <ExplorerPanel />
            <PropertiesPanel />
          </div>
          <div className="ml-[7px] flex w-[806px] shrink-0 flex-col">
            <div className="flex h-[29px] shrink-0 pl-[9px] pt-px">
              <div className="flex h-[28px] w-[130px] items-center rounded-t-[2px] border-x border-t border-[#bcc5d3] bg-[#d5dbe9] pl-[8px] text-[12px] font-bold text-[#1f2937]">
                Car Flow.xml
                <div className="ml-[7px]">
                  <PinSide />
                </div>
                <div className="ml-[8px]">
                  <CircX size={14} c="#444" />
                </div>
              </div>
              <div className="ml-auto mr-[12px] mt-[12px] h-0 w-0 border-x-[4px] border-t-[4px] border-x-transparent border-t-[#7d8490]" />
            </div>
            <Editor />
            <ParamsPanel />
          </div>
        </div>
      </div>
      <FloatingWindow />
      <div className="absolute left-[708px] top-[88px] h-[648px] w-[404px] bg-[rgba(245,199,117,0.48)]" />
      <DockGuide className="left-[692px] top-[360px]" arrow="M16 23V13M12 16.500l4-4 4 4" />
      <DockGuide className="left-[656px] top-[396px]" arrow="M21 18H11M14.500 14l-4 4 4 4" />
      <DockGuide className="left-[692px] top-[396px]" />
      <DockGuide className="left-[728px] top-[396px]" dark arrow="M11 18h10M17.500 14l4 4-4 4" />
      <DockGuide className="left-[692px] top-[432px]" arrow="M16 13v10M12 19.500l4 4 4-4" />
    </div>
  );
}
